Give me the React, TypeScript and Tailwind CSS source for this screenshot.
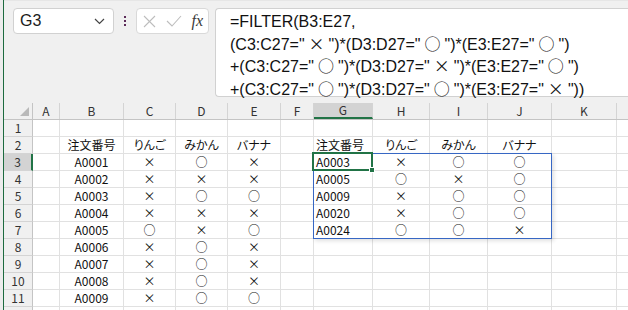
import React from "react";

type Col = { key: string; w: string; align: "center" | "left" };

const cols: Col[] = [
  { key: "A", w: "w-[27px]", align: "center" },
  { key: "B", w: "w-[64px]", align: "center" },
  { key: "C", w: "w-[52px]", align: "center" },
  { key: "D", w: "w-[52px]", align: "center" },
  { key: "E", w: "w-[53px]", align: "center" },
  { key: "F", w: "w-[33px]", align: "center" },
  { key: "G", w: "w-[59px]", align: "left" },
  { key: "H", w: "w-[57px]", align: "center" },
  { key: "I", w: "w-[58px]", align: "center" },
  { key: "J", w: "w-[64px]", align: "center" },
  { key: "K", w: "w-[65px]", align: "center" },
  { key: "L", w: "w-[80px]", align: "center" },
];

// row data: A..L
const X = "×";
const O = "○";
const rows: string[][] = [
  ["", "", "", "", "", "", "", "", "", "", "", ""],
  ["", "注文番号", "りんご", "みかん", "バナナ", "", "注文番号", "りんご", "みかん", "バナナ", "", ""],
  ["", "A0001", X, O, X, "", "A0003", X, O, O, "", ""],
  ["", "A0002", X, X, X, "", "A0005", O, X, O, "", ""],
  ["", "A0003", X, O, O, "", "A0009", X, O, O, "", ""],
  ["", "A0004", X, X, X, "", "A0020", X, O, O, "", ""],
  ["", "A0005", O, X, O, "", "A0024", O, O, X, "", ""],
  ["", "A0006", X, O, X, "", "", "", "", "", "", ""],
  ["", "A0007", X, O, X, "", "", "", "", "", "", ""],
  ["", "A0008", X, O, X, "", "", "", "", "", "", ""],
  ["", "A0009", X, O, O, "", "", "", "", "", "", ""],
  ["", "", "", "", "", "", "", "", "", "", "", ""],
];

// formula symbols get a wide box like the IME glyphs in the reference
const Sym: React.FC<{ c: string }> = ({ c }) => (
  <span className="inline-block w-[24px] text-center font-['Noto_Sans_CJK_JP',sans-serif]">{c}</span>
);

const FormulaBar: React.FC = () => (
  <div className="h-[102px] shrink-0 flex items-start pt-[7px] pl-[9px] gap-[6px]">
    {/* name box */}
    <div className="w-[101px] h-[26px] bg-white border border-[#d1d1d1] rounded-[4px] flex items-center justify-between pl-[6px] pr-[8px]">
      <span className="font-['Liberation_Sans',sans-serif] text-[16px] text-[#1b1b1b]">G3</span>
      <svg width="11" height="7" viewBox="0 0 11 7">
        <polyline points="1,1 5.5,5.5 10,1" fill="none" stroke="#444" strokeWidth="1.2" />
      </svg>
    </div>
    {/* dots */}
    <div className="w-[10px] h-[26px] flex flex-col items-center justify-center gap-[2px]">
      <div className="w-[2px] h-[2px] bg-[#5b2a58]" />
      <div className="w-[2px] h-[2px] bg-[#5b2a58]" />
      <div className="w-[2px] h-[2px] bg-[#5b2a58]" />
    </div>
    {/* fx box */}
    <div className="w-[73px] h-[26px] bg-white border border-[#d9d9d9] rounded-[4px] flex items-center pl-[6px] pr-[5px] justify-between">
      <svg width="13" height="13" viewBox="0 0 13 13">
        <line x1="1" y1="1" x2="12" y2="12" stroke="#bdbdbd" strokeWidth="1.1" />
        <line x1="12" y1="1" x2="1" y2="12" stroke="#bdbdbd" strokeWidth="1.1" />
      </svg>
      <svg width="16" height="13" viewBox="0 0 16 13">
        <polyline points="1,6 6,11 15,1" fill="none" stroke="#bdbdbd" strokeWidth="1.1" />
      </svg>
      <span className="font-['Liberation_Serif',serif] italic text-[16px] text-[#3a3a3a] leading-none">
        fx
      </span>
    </div>
    {/* formula */}
    <div className="flex-1 h-[89px] bg-white border border-[#d1d1d1] rounded-l-[4px] border-r-0 pl-[14px] pt-[3px] font-['Liberation_Sans',sans-serif] text-[16px] leading-[20.5px] text-[#111] whitespace-nowrap">
      <div>=FILTER(B3:E27,</div>
      <div>
        (C3:C27="<Sym c={X} />")*(D3:D27="<Sym c={O} />")*(E3:E27="<Sym c={O} />")
      </div>
      <div>
        +(C3:C27="<Sym c={O} />")*(D3:D27="<Sym c={X} />")*(E3:E27="<Sym c={O} />")
      </div>
      <div>
        +(C3:C27="<Sym c={O} />")*(D3:D27="<Sym c={O} />")*(E3:E27="<Sym c={X} />"))
      </div>
    </div>
  </div>
);

const Grid: React.FC = () => (
  <div className="relative shrink-0 bg-white font-['Noto_Sans_CJK_JP',sans-serif] [font-feature-settings:'palt'] text-[12px] text-[#111]">
    {/* column headers */}
    <div className="flex h-[17px] bg-[#f0f0f0] border-b border-[#c4c4c4]">
      <div className="w-[29px] shrink-0 h-full border-r border-[#c4c4c4] relative">
        <svg className="absolute right-[3px] bottom-[3px]" width="9" height="9" viewBox="0 0 9 9">
          <polygon points="9,0 9,9 0,9" fill="#b9b9b9" />
        </svg>
      </div>
      {cols.map((c) => (
        <div
          key={c.key}
          className={`${c.w} shrink-0 h-full border-r border-[#d4d4d4] flex items-center justify-center text-[#333] ${
            c.key === "G" ? "bg-[#d3d3d3] border-b-2 border-b-[#217346]" : ""
          }`}
        >
          {c.key}
        </div>
      ))}
    </div>
    {/* rows */}
    {rows.map((r, i) => (
      <div key={i} className="flex h-[17px]">
        <div
          className={`w-[29px] shrink-0 h-full flex items-center justify-center border-b border-[#d4d4d4] text-[#333] ${
            i === 2
              ? "bg-[#d3d3d3] border-r-2 border-r-[#217346]"
              : "bg-[#f0f0f0] border-r border-r-[#c4c4c4]"
          }`}
        >
          {i + 1}
        </div>
        {cols.map((c, j) => (
          <div
            key={c.key}
            className={`${c.w} shrink-0 h-full border-r border-b border-[#e1e1e1] flex items-center leading-none ${
              c.align === "left" ? "justify-start pl-[2px]" : "justify-center"
            }`}
          >
            {r[j]}
          </div>
        ))}
      </div>
    ))}
    {/* spill range G3:J7 */}
    <div className="absolute left-[309px] top-[50px] w-[239px] h-[86px] border border-[#3767c4] shadow-[2px_2px_4px_rgba(0,0,0,0.12)] pointer-events-none" />
    {/* active cell G3 */}
    <div className="absolute left-[308px] top-[49px] w-[61px] h-[19px] border-2 border-[#217346] pointer-events-none">
      <div className="absolute right-[-4px] bottom-[-4px] w-[6px] h-[6px] bg-[#217346] border border-white" />
    </div>
  </div>
);

export default function App() {
  return (
    <div className="w-[628px] h-[310px] overflow-hidden flex bg-[#f0f0f0]">
      <div className="w-[3px] shrink-0 bg-[#ececec]" />
      <div className="w-[1px] shrink-0 bg-[#1d6b3f]" />
      <div className="flex-1 flex flex-col min-w-0 border-t border-[#e6e6e6]">
        <FormulaBar />
        <Grid />
      </div>
    </div>
  );
}
